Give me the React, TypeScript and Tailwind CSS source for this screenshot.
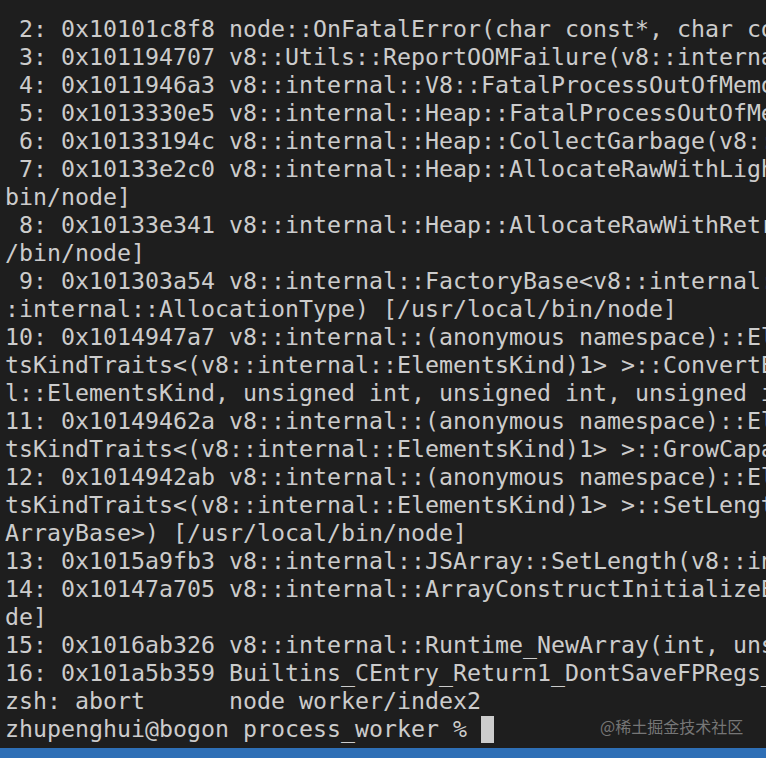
import React from "react";

const lines: string[] = [
  " 2: 0x10101c8f8 node::OnFatalError(char const*, char const*) [/usr/local/bin/node]",
  " 3: 0x101194707 v8::Utils::ReportOOMFailure(v8::internal::Isolate*, char const*, bool) [/usr/local/bin/node]",
  " 4: 0x1011946a3 v8::internal::V8::FatalProcessOutOfMemory(v8::internal::Isolate*, char const*, bool)",
  " 5: 0x1013330e5 v8::internal::Heap::FatalProcessOutOfMemory(char const*) [/usr/local/bin/node]",
  " 6: 0x10133194c v8::internal::Heap::CollectGarbage(v8::internal::AllocationSpace, v8::internal::GarbageCollectionReason)",
  " 7: 0x10133e2c0 v8::internal::Heap::AllocateRawWithLightRetrySlowPath(int, v8::internal::AllocationType) [/usr/local/",
  "bin/node]",
  " 8: 0x10133e341 v8::internal::Heap::AllocateRawWithRetryOrFailSlowPath(int, v8::internal::AllocationType) [/usr/local",
  "/bin/node]",
  " 9: 0x101303a54 v8::internal::FactoryBase<v8::internal::Factory>::NewFixedArrayWithFiller(v8::internal::Handle, v8:",
  ":internal::AllocationType) [/usr/local/bin/node]",
  "10: 0x1014947a7 v8::internal::(anonymous namespace)::ElementsAccessorBase<v8::internal::FastHoleyObjectElementsAccessor, Elemen",
  "tsKindTraits<(v8::internal::ElementsKind)1> >::ConvertElementsWithCapacity(v8::internal::Handle<v8::internal::JSObject>, v8::interna",
  "l::ElementsKind, unsigned int, unsigned int, unsigned int) [/usr/local/bin/node]",
  "11: 0x10149462a v8::internal::(anonymous namespace)::ElementsAccessorBase<v8::internal::FastHoleyObjectElementsAccessor, Elemen",
  "tsKindTraits<(v8::internal::ElementsKind)1> >::GrowCapacityAndConvertImpl(v8::internal::Handle<v8::internal::JSObject>, unsigned int)",
  "12: 0x1014942ab v8::internal::(anonymous namespace)::ElementsAccessorBase<v8::internal::FastHoleyObjectElementsAccessor, Elemen",
  "tsKindTraits<(v8::internal::ElementsKind)1> >::SetLengthImpl(v8::internal::Isolate*, v8::internal::Handle<v8::internal::Fixed",
  "ArrayBase>) [/usr/local/bin/node]",
  "13: 0x1015a9fb3 v8::internal::JSArray::SetLength(v8::internal::Handle<v8::internal::JSArray>, unsigned int) [/usr/local/bin/node]",
  "14: 0x10147a705 v8::internal::ArrayConstructInitializeElements(v8::internal::Handle<v8::internal::JSArray>) [/usr/local/bin/no",
  "de]",
  "15: 0x1016ab326 v8::internal::Runtime_NewArray(int, unsigned long*, v8::internal::Isolate*) [/usr/local/bin/node]",
  "16: 0x101a5b359 Builtins_CEntry_Return1_DontSaveFPRegs_ArgvOnStack_NoBuiltinExit [/usr/local/bin/node]",
  "zsh: abort      node worker/index2",
];

export default function App() {
  return (
    <div className="relative flex h-[758px] w-[766px] flex-col overflow-hidden bg-[#1e1e1e]">
      <div
        className="flex-1 overflow-hidden whitespace-pre pl-[5px] pt-[15px] text-[23.25px] leading-[28px] text-[#cccccc]"
        style={{ fontFamily: '"DejaVu Sans Mono", "Liberation Mono", monospace' }}
      >
        {lines.map((l, i) => (
          <div key={i} className="h-[28px] overflow-hidden">
            {l}
          </div>
        ))}
        <div className="h-[28px] overflow-hidden">
          {"zhupenghui@bogon process_worker % "}
          <span className="inline-block h-[27px] w-[13px] bg-[#cccccc] align-top mt-[1px]" />
        </div>
      </div>
      <div className="h-[10px] w-full bg-[#2e6fb6]" />
      <div
        className="absolute left-[600px] top-[716px] text-[16px] leading-[20px] text-[#8c8c8c] opacity-80"
        style={{ fontFamily: '"Noto Sans CJK SC", "Noto Sans", sans-serif' }}
      >
        @稀土掘金技术社区
      </div>
    </div>
  );
}
